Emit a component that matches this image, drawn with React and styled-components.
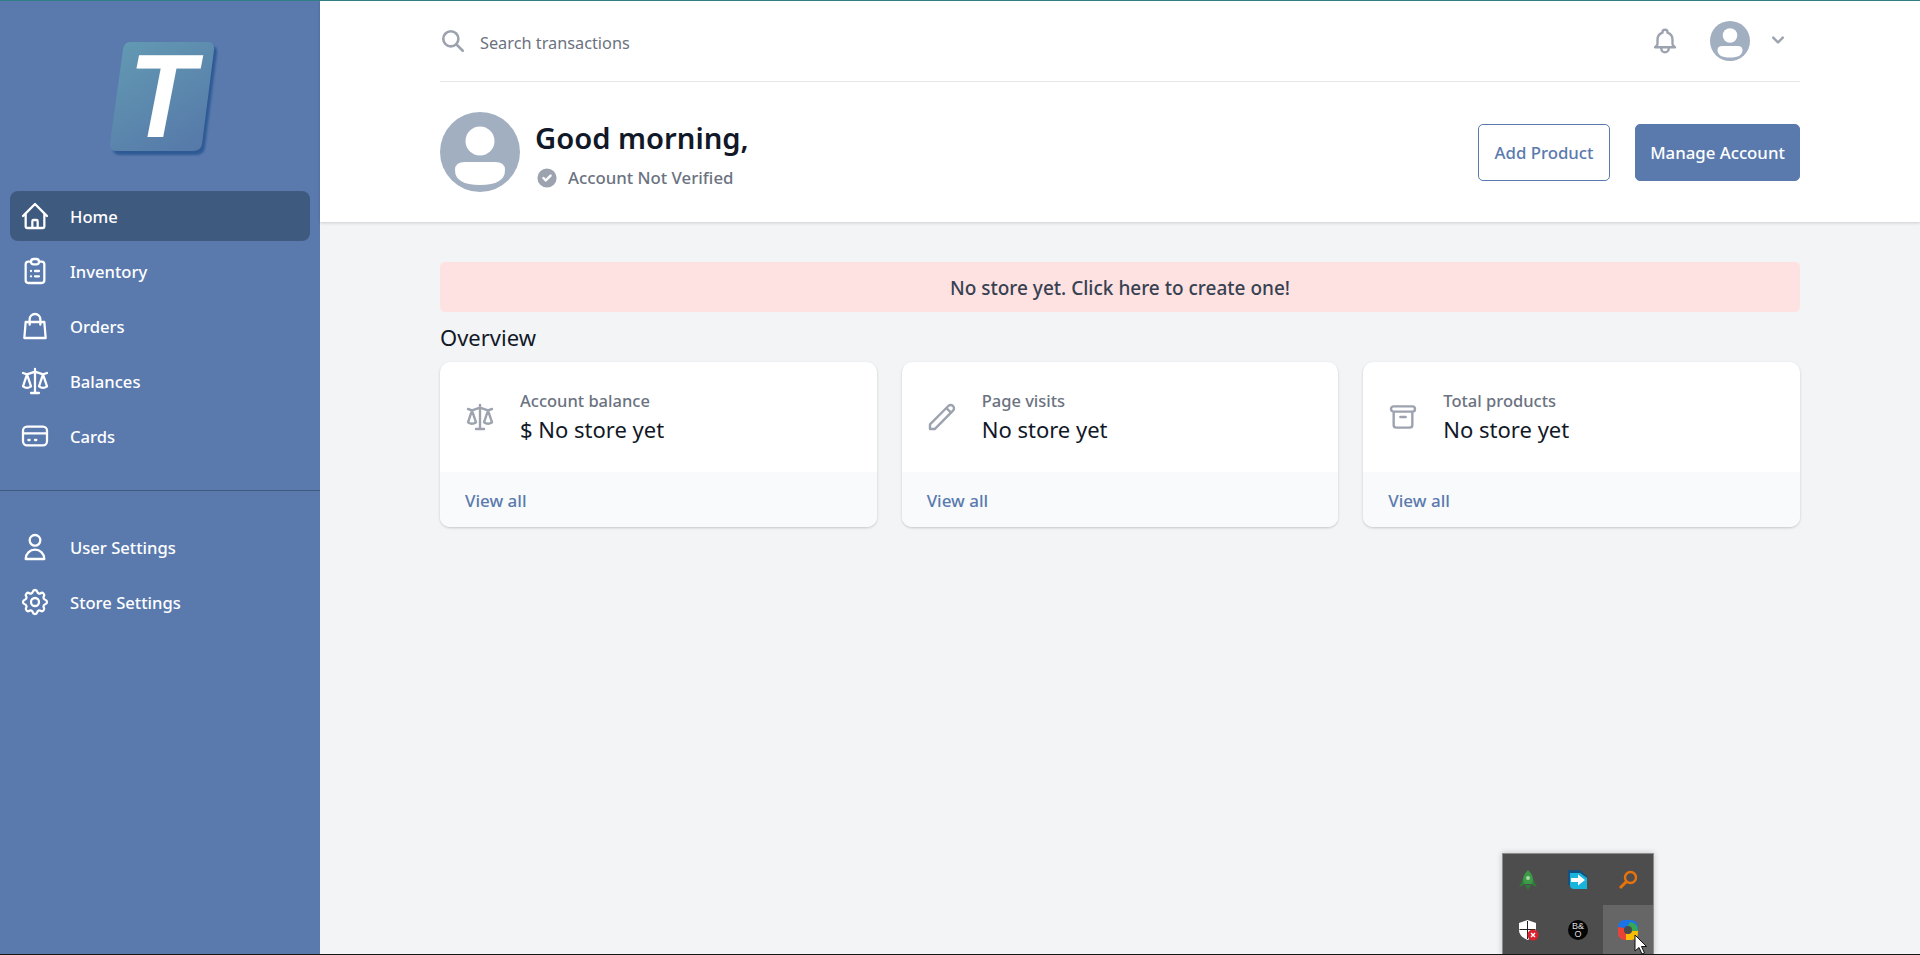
import React from "react";
import styled, { createGlobalStyle } from "styled-components";
import {
    HiOutlineHome,
    HiOutlineClipboardList,
    HiOutlineShoppingBag,
    HiOutlineScale,
    HiOutlineCreditCard,
    HiOutlineUser,
    HiOutlineCog,
    HiOutlinePencil,
    HiOutlineArchive,
    HiOutlineBell,
    HiOutlineSearch,
    HiCheckCircle,
    HiChevronDown
} from "react-icons/hi";

const BRAND = "#5a7aae";
const BRAND_DARK = "#3f5a7f";
const FONT = `"Noto Sans", "Open Sans", sans-serif`;

const GlobalStyle = createGlobalStyle`
    html, body {
        margin: 0;
        padding: 0;
        height: 100%;
        background: #f3f4f6;
        font-family: ${FONT};
    }
    #root {
        height: 100%;
    }
    * {
        box-sizing: border-box;
    }
`;

const Page = styled.div`
    position: relative;
    display: flex;
    height: 955px;
    overflow: hidden;
    border-top: 1px solid #2f7f85;
    border-bottom: 1px solid #161616;
`;

const Sidebar = styled.aside`
    width: 320px;
    flex-shrink: 0;
    background: ${BRAND};
    display: flex;
    flex-direction: column;
`;
const LogoWrap = styled.div`
    height: 190px;
    padding: 21px 0 0 110px;
    flex-shrink: 0;
`;
const NavList = styled.nav`
    display: flex;
    flex-direction: column;
    gap: 5px;
    padding: 0 10px;
`;
const NavItem = styled.a`
    height: 50px;
    display: flex;
    align-items: center;
    gap: 19px;
    padding-left: 9px;
    border-radius: 8px;
    color: #fff;
    font-size: 16.6px;
    font-weight: 500;
    background: ${props => (props.$active ? BRAND_DARK : "transparent")};
    svg {
        width: 32px;
        height: 32px;
        flex-shrink: 0;
    }
    svg path {
        stroke-width: 1.7;
    }
`;
const NavLabel = styled.span`
    padding-top: 1px;
`;
const SideDivider = styled.div`
    height: 1px;
    background: ${BRAND_DARK};
    margin: 29px 0 31px;
`;

const Main = styled.main`
    flex: 1;
    min-width: 0;
    display: flex;
    flex-direction: column;
`;
const Header = styled.header`
    background: #fff;
    height: 221px;
    padding: 0 120px;
    box-shadow: 0 1px 3px rgba(0, 0, 0, 0.16);
`;
const TopBar = styled.div`
    height: 81px;
    display: flex;
    align-items: center;
    border-bottom: 1px solid #e5e7eb;
`;
const SearchBox = styled.div`
    flex: 1;
    display: flex;
    align-items: center;
    gap: 14px;
    color: #6b7280;
    font-size: 16.3px;
    svg {
        width: 26px;
        height: 26px;
        color: #9ca3af;
        margin-top: -1px;
    }
    svg path {
        stroke-width: 2.4;
    }
    span {
        padding-top: 3px;
    }
`;
const BellIcon = styled(HiOutlineBell)`
    width: 30px;
    height: 30px;
    color: #9ca3af;
    margin-right: 30px;
    margin-top: -1px;
    path {
        stroke-width: 1.9;
    }
`;
const ChevronIcon = styled(HiChevronDown)`
    width: 24px;
    height: 24px;
    color: #9ca3af;
    margin-left: 16px;
    margin-right: 10px;
    margin-top: -2px;
`;
const Hero = styled.div`
    height: 140px;
    display: flex;
    align-items: center;
    justify-content: space-between;
`;
const Greeting = styled.div`
    display: flex;
    align-items: center;
    gap: 15px;
`;
const GreetingText = styled.div`
    padding-top: 5px;
`;
const GreetingTitle = styled.h1`
    margin: 0 0 9px;
    font-size: 29.2px;
    line-height: 38px;
    font-weight: 600;
    color: #111827;
`;
const VerifyRow = styled.div`
    display: flex;
    align-items: center;
    gap: 9px;
    font-size: 16.8px;
    font-weight: 500;
    color: #6b7280;
    line-height: 24px;
    svg {
        width: 24px;
        height: 24px;
        color: #9ca3af;
    }
`;
const ButtonRow = styled.div`
    display: flex;
    gap: 25px;
    padding-top: 1px;
`;
const Button = styled.button`
    height: 57px;
    padding: 0;
    width: ${props => props.$width}px;
    border: 1px solid ${BRAND};
    border-radius: 5px;
    font-family: ${FONT};
    font-size: 16.8px;
    font-weight: 500;
    color: ${props => (props.$primary ? "#fff" : BRAND)};
    background: ${props => (props.$primary ? BRAND : "#fff")};
`;

const Content = styled.div`
    padding: 40px 120px 0;
`;
const Banner = styled.div`
    height: 50px;
    padding-top: 1px;
    border-radius: 5px;
    background: #fee2e2;
    color: #374151;
    font-size: 19px;
    font-weight: 500;
    display: flex;
    align-items: center;
    justify-content: center;
`;
const SectionTitle = styled.h2`
    margin: 10px 0 10px;
    font-size: 22px;
    line-height: 30px;
    font-weight: 400;
    color: #111827;
`;
const CardGrid = styled.div`
    display: grid;
    grid-template-columns: repeat(3, 1fr);
    gap: 25px;
`;
const Card = styled.div`
    height: 165px;
    border-radius: 10px;
    overflow: hidden;
    background: #fff;
    box-shadow: 0 1px 3px rgba(0, 0, 0, 0.14), 0 1px 2px rgba(0, 0, 0, 0.06);
    display: flex;
    flex-direction: column;
`;
const CardBody = styled.div`
    height: 110px;
    display: flex;
    align-items: center;
    gap: 24px;
    padding: 0 0 1px 24px;
    svg {
        width: 32px;
        height: 32px;
        color: #9ca3af;
        flex-shrink: 0;
    }
    svg path {
        stroke-width: 1.8;
    }
`;
const CardLabel = styled.div`
    font-size: 16.5px;
    line-height: 24px;
    font-weight: 500;
    color: #6b7280;
`;
const CardValue = styled.div`
    font-size: 22px;
    line-height: 32px;
    font-weight: 400;
    color: #111827;
`;
const CardFooter = styled.a`
    flex: 1;
    display: flex;
    align-items: center;
    padding: 1px 0 0 25px;
    background: #f9fafb;
    color: ${BRAND};
    font-size: 17px;
    font-weight: 500;
`;

const Tray = styled.div`
    position: absolute;
    left: 1502px;
    top: 852px;
    width: 152px;
    height: 102px;
    background: #4d4d4d;
    border: 1px solid #8c8c8c;
    border-bottom: 0;
    box-shadow: 0 0 6px rgba(0, 0, 0, 0.2);
    display: grid;
    grid-template-columns: repeat(3, 50px);
    grid-template-rows: 51px 50px;
`;
const TrayCell = styled.div`
    display: flex;
    align-items: center;
    justify-content: center;
    background: ${props => (props.$hot ? "#666666" : "transparent")};
`;
const BoBadge = styled.div`
    width: 20px;
    height: 20px;
    border-radius: 50%;
    background: #050505;
    color: #ddd;
    font-size: 9px;
    line-height: 8px;
    text-align: center;
    padding-top: 2px;
    font-family: "Liberation Sans", sans-serif;
`;
const Cursor = styled.svg`
    position: absolute;
    left: 131px;
    top: 80px;
`;

const Logo = () => (
    <svg width="108" height="150" viewBox="0 -20 108 150">
        <defs>
            <linearGradient id="logoFill" x1="0.2" y1="0" x2="0.8" y2="1">
                <stop offset="0" stopColor="#6298b2" />
                <stop offset="1" stopColor="#5679a9" />
            </linearGradient>
            <filter id="logoBlur">
                <feGaussianBlur stdDeviation="1" />
            </filter>
        </defs>
        <path
            d="M22 1.5 H98 Q106 1.5 105 9 L93 103 Q92 111 84 111 H8 Q0 111 1.5 103 L14 9 Q15 1.5 22 1.5 Z"
            fill="#2f5a94"
            transform="translate(2 2)"
            filter="url(#logoBlur)"
        />
        <path
            d="M20 0 H98 Q105 0 104 8 L92 102 Q91 109 83 109 H7 Q-1 109 0 101 L13 8 Q14 0 20 0 Z"
            fill="url(#logoFill)"
        />
        <text
            x="0"
            y="0"
            transform="translate(12 95) skewX(-11) scale(1 1.09)"
            fontFamily="Liberation Sans"
            fontWeight="700"
            fontSize="109"
            fill="#fff"
        >
            T
        </text>
    </svg>
);

const Avatar = ({ size }) => (
    <svg width={size} height={size} viewBox="0 0 80 80" style={{ flexShrink: 0 }}>
        <circle cx="40" cy="40" r="40" fill="#a2afc1" />
        <circle cx="40" cy="29" r="14.5" fill="#fff" />
        <path d="M25 50 H55 Q65 50 65 58 Q65 73 40 73 Q15 73 15 58 Q15 50 25 50 Z" fill="#fff" />
    </svg>
);

const StatCard = ({ icon, label, value }) => (
    <Card>
        <CardBody>
            {icon}
            <div>
                <CardLabel>{label}</CardLabel>
                <CardValue>{value}</CardValue>
            </div>
        </CardBody>
        <CardFooter>View all</CardFooter>
    </Card>
);

const NAV_TOP = [
    { label: "Home", icon: <HiOutlineHome />, active: true },
    { label: "Inventory", icon: <HiOutlineClipboardList /> },
    { label: "Orders", icon: <HiOutlineShoppingBag /> },
    { label: "Balances", icon: <HiOutlineScale /> },
    { label: "Cards", icon: <HiOutlineCreditCard /> }
];
const NAV_BOTTOM = [
    { label: "User Settings", icon: <HiOutlineUser /> },
    { label: "Store Settings", icon: <HiOutlineCog /> }
];

const renderNav = items =>
    items.map(item => (
        <NavItem key={item.label} $active={item.active}>
            {item.icon}
            <NavLabel>{item.label}</NavLabel>
        </NavItem>
    ));

export default function App() {
    return (
        <Page>
            <GlobalStyle />
            <Sidebar>
                <LogoWrap>
                    <Logo />
                </LogoWrap>
                <NavList>{renderNav(NAV_TOP)}</NavList>
                <SideDivider />
                <NavList>{renderNav(NAV_BOTTOM)}</NavList>
            </Sidebar>
            <Main>
                <Header>
                    <TopBar>
                        <SearchBox>
                            <HiOutlineSearch />
                            <span>Search transactions</span>
                        </SearchBox>
                        <BellIcon />
                        <Avatar size={40} />
                        <ChevronIcon />
                    </TopBar>
                    <Hero>
                        <Greeting>
                            <Avatar size={80} />
                            <GreetingText>
                                <GreetingTitle>Good morning,</GreetingTitle>
                                <VerifyRow>
                                    <HiCheckCircle />
                                    Account Not Verified
                                </VerifyRow>
                            </GreetingText>
                        </Greeting>
                        <ButtonRow>
                            <Button $width={132}>Add Product</Button>
                            <Button $width={165} $primary>
                                Manage Account
                            </Button>
                        </ButtonRow>
                    </Hero>
                </Header>
                <Content>
                    <Banner>No store yet. Click here to create one!</Banner>
                    <SectionTitle>Overview</SectionTitle>
                    <CardGrid>
                        <StatCard icon={<HiOutlineScale />} label="Account balance" value="$ No store yet" />
                        <StatCard icon={<HiOutlinePencil />} label="Page visits" value="No store yet" />
                        <StatCard icon={<HiOutlineArchive />} label="Total products" value="No store yet" />
                    </CardGrid>
                </Content>
            </Main>
            <Tray>
                <TrayCell>
                    <svg width="20" height="22" viewBox="0 0 20 22">
                        <path d="M10 1 C14 5 16 9 15 15 L5 15 C4 9 6 5 10 1 Z" fill="#3c9a46" />
                        <path d="M5 10 L1 18 L6 16 Z M15 10 L19 18 L14 16 Z" fill="#2f7a38" />
                        <path d="M7 16 H13 L10 21 Z" fill="#2f7a38" />
                        <circle cx="10" cy="9" r="2" fill="#a8d8a8" />
                    </svg>
                </TrayCell>
                <TrayCell>
                    <svg width="20" height="20" viewBox="0 0 20 20">
                        <path d="M0 0 H12 L19 6 V10 H3 V15 H0 Z" fill="#16507f" />
                        <path d="M2 3 H12 L19 8 V19 H6 Q2 19 2 15 Z" fill="#17b4dc" />
                        <path d="M3 8 H10 V4.5 L17 10 L10 15.5 V12 H3 Z" fill="#fff" />
                    </svg>
                </TrayCell>
                <TrayCell>
                    <svg width="20" height="20" viewBox="0 0 20 20">
                        <circle cx="12.5" cy="7.5" r="5.5" fill="none" stroke="#e8730c" strokeWidth="2.4" />
                        <path d="M8.5 11.5 L2 18" stroke="#e8730c" strokeWidth="3" />
                    </svg>
                </TrayCell>
                <TrayCell>
                    <svg width="21" height="21" viewBox="0 0 21 21">
                        <path d="M9.5 0 L18 3 V10 C18 15 14 18 9.5 20 C5 18 1 15 1 10 V3 Z" fill="#fff" />
                        <path d="M9 1 H10 V19 H9 Z M1.5 9 H17.5 V10 H1.5 Z" fill="#222" />
                        <circle cx="15" cy="15" r="5.5" fill="#d8232f" />
                        <path d="M13 13 L17 17 M17 13 L13 17" stroke="#fff" strokeWidth="1.4" />
                    </svg>
                </TrayCell>
                <TrayCell>
                    <BoBadge>
                        B&amp;
                        <br />
                        O
                    </BoBadge>
                </TrayCell>
                <TrayCell $hot>
                    <svg width="20" height="20" viewBox="0 0 20 20">
                        <rect x="0" y="0" width="20" height="20" rx="7" fill="#1a73e8" />
                        <path d="M0 7 V13 Q0 20 7 20 H10 L10 14 Q6 14 6 8 Z" fill="#ea4335" />
                        <path d="M8 20 H13 Q20 20 20 13 V10 L14 10 Q14 14 8 14 Z" fill="#fbbc04" />
                        <path d="M12 2 Q20 3 20 11 L14 11 Q14 7 10 6 Z" fill="#34a853" />
                        <circle cx="10" cy="10" r="4" fill="#4a4a4a" />
                    </svg>
                </TrayCell>
                <Cursor width="13" height="22" viewBox="0 0 13 22">
                    <path
                        d="M1 1 V17 L5 13.5 L8 20 L10.5 19 L7.5 12.5 H12.5 Z"
                        fill="#fff"
                        stroke="#111"
                        strokeWidth="1"
                    />
                </Cursor>
            </Tray>
        </Page>
    );
}
